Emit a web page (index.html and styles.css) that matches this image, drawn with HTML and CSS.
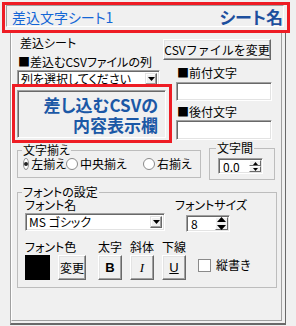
FILE: index.html
```html
<!DOCTYPE html>
<html lang="ja">
<head>
    <meta charset="UTF-8">
    <title>差込文字シート</title>
    <link rel="stylesheet" href="styles.css">
</head>
<body>
    <div class="sheet-title">
        <div class="title-field">
            <span class="title-text">差込文字シート1</span>
            <span class="title-note">シート名</span>
        </div>
    </div>

    <div class="panel">
        <div class="page">
            <div class="top">
                <div class="col-left">
                    <div class="lbl lbl-sheet">差込シート</div>
                    <div class="lbl lbl-col">■差込むCSVファイルの列</div>
                    <div class="combo combo-col">
                        <span class="combo-text">列を選択してください</span>
                        <span class="combo-btn"><svg width="7" height="4"><path d="M0 0h7L3.5 4z"/></svg></span>
                    </div>
                    <div class="csv-box">
                        <div class="csv-field">
                            <span>差し込むCSVの</span>
                            <span>内容表示欄</span>
                        </div>
                    </div>
                </div>
                <div class="col-right">
                    <button class="btn btn-csv">CSVファイルを変更</button>
                    <div class="lbl lbl-pre">■前付文字</div>
                    <div class="textbox tb-pre"></div>
                    <div class="lbl lbl-post">■後付文字</div>
                    <div class="textbox tb-post"></div>
                </div>
            </div>

            <div class="row-align">
                <fieldset class="group group-align">
                    <legend>文字揃え</legend>
                    <div class="radios">
                        <label class="radio r-left"><span class="radio-dot checked"></span>左揃え</label>
                        <label class="radio r-center"><span class="radio-dot"></span>中央揃え</label>
                        <label class="radio r-right"><span class="radio-dot"></span>右揃え</label>
                    </div>
                </fieldset>
                <fieldset class="group group-spacing">
                    <legend>文字間</legend>
                    <div class="spin spin-spacing">
                        <span class="spin-text">0.0</span>
                        <span class="spin-btns">
                            <span class="spin-half"><svg width="5" height="3"><path d="M2.5 0L5 3H0z"/></svg></span>
                            <span class="spin-half"><svg width="5" height="3"><path d="M0 0h5L2.5 3z"/></svg></span>
                        </span>
                    </div>
                </fieldset>
            </div>

            <fieldset class="group group-font">
                <legend>フォントの設定</legend>
                <div class="font-top">
                    <div class="fname-col">
                        <div class="lbl">フォント名</div>
                        <div class="combo combo-font">
                            <span class="combo-text">MS ゴシック</span>
                            <span class="combo-btn"><svg width="7" height="4"><path d="M0 0h7L3.5 4z"/></svg></span>
                        </div>
                    </div>
                    <div class="fsize-col">
                        <div class="lbl">フォントサイズ</div>
                        <div class="spin spin-size">
                            <span class="spin-text">8</span>
                            <span class="spin-arrows">
                                <svg width="9" height="13"><path d="M4.5 0L9 5H0z M0 8h9L4.5 13z"/></svg>
                            </span>
                        </div>
                    </div>
                </div>
                <div class="style-grid">
                    <div class="lbl">フォント色</div>
                    <div class="lbl">太字</div>
                    <div class="lbl">斜体</div>
                    <div class="lbl">下線</div>
                    <div></div>

                    <div class="color-cell">
                        <span class="swatch"></span>
                        <button class="btn btn-change">変更</button>
                    </div>
                    <div><button class="btn btn-style bold">B</button></div>
                    <div><button class="btn btn-style italic">I</button></div>
                    <div><button class="btn btn-style under">U</button></div>
                    <label class="check"><span class="check-box"></span>縦書き</label>
                </div>
            </fieldset>
        </div>
    </div>
</body>
</html>
```

FILE: styles.css
```css
* {
    box-sizing: border-box;
}
body {
    margin: 0;
    width: 296px;
    height: 326px;
    overflow: hidden;
    background: #f0f0f0;
    font-family: "Noto Sans CJK JP", "Noto Sans", sans-serif;
    font-size: 12px;
    line-height: 14px;
    font-feature-settings: "palt";
    color: #000;
}

/* sheet name strip with red note frame */
.sheet-title {
    position: relative;
    z-index: 1;
    margin: 2px 0 0 2px;
    width: 288px;
    height: 31px;
    border: 3px solid #ee1c24;
    padding: 0 3px 3px 1px;
}
.title-field {
    height: 100%;
    display: flex;
    align-items: center;
    justify-content: space-between;
    padding: 0 0 0 5px;
    border: 1px solid;
    border-color: #a0a0a0 #fff #fff #a0a0a0;
}
.title-text {
    font-size: 14px;
    color: #1466d6;
    margin-top: 1px;
}
.title-note {
    font-size: 17px;
    font-weight: bold;
    color: #1d4f9e;
    margin-top: 1px;
}

/* tab page */
.panel {
    margin-left: 10px;
    width: 276px;
    height: 292px;
    border-left: 1px solid #a0a0a0;
    border-right: 1px solid #696969;
    border-bottom: 2px solid #696969;
    padding: 0 3px 2px 0;
}
.page {
    height: 100%;
    border-left: 1px solid #fff;
    border-right: 1px solid #a0a0a0;
    border-bottom: 1px solid #a0a0a0;
}

.lbl {
    white-space: nowrap;
}

.top {
    display: flex;
    height: 110px;
}
.col-left {
    width: 151px;
    flex: none;
}
.col-right {
    width: 112px;
    flex: none;
}
.lbl-sheet {
    margin: 3px 0 0 8px;
}
.lbl-col {
    margin: 5px 0 0 6px;
}

/* win controls */
.btn {
    font-family: inherit;
    font-size: 12px;
    line-height: 14px;
    color: #000;
    background: #f0f0f0;
    border: 1px solid;
    border-color: #fff #696969 #696969 #fff;
    box-shadow: inset -1px -1px 0 #a0a0a0, inset 1px 1px 0 #e3e3e3;
    padding: 0;
    margin: 0;
}
.textbox,
.combo,
.spin {
    background: #fff;
    border: 1px solid;
    border-color: #a0a0a0 #fff #fff #a0a0a0;
    box-shadow: inset 1px 1px 0 #696969, inset -1px -1px 0 #e3e3e3;
}
.combo {
    display: flex;
    align-items: center;
    justify-content: space-between;
    padding: 2px 2px 2px 3px;
    overflow: hidden;
}
.combo-text {
    white-space: nowrap;
    line-height: 12px;
}
.combo-btn {
    flex: none;
    width: 12px;
    height: 12px;
    display: flex;
    align-items: center;
    justify-content: center;
    background: #f0f0f0;
    border: 1px solid;
    border-color: #e3e3e3 #696969 #696969 #e3e3e3;
    box-shadow: inset -1px -1px 0 #a0a0a0, inset 1px 1px 0 #fff;
}
.combo-col {
    margin: 1px 0 0 5px;
    width: 143px;
    height: 18px;
}

/* CSV content area with red note frame */
.csv-box {
    position: relative;
    z-index: 1;
    margin-top: -4px;
    width: 160px;
    height: 59px;
    border: 3px solid #ee1c24;
    padding: 3px 3px 2px 2px;
    background: #f0f0f0;
}
.csv-field {
    height: 100%;
    display: flex;
    flex-direction: column;
    justify-content: center;
    align-items: flex-end;
    padding: 1px 7px 0 0;
    border: 1px solid;
    border-color: #a0a0a0 #fff #fff #a0a0a0;
    box-shadow: inset 1px 1px 0 #696969;
    font-size: 17px;
    line-height: 20px;
    font-weight: bold;
    color: #1b58a6;
    white-space: nowrap;
}

.btn-csv {
    display: block;
    margin-top: 6px;
    width: 108px;
    height: 21px;
}
.lbl-pre {
    margin: 6px 0 0 14px;
}
.tb-pre {
    margin: 2px 0 0 13px;
    width: 96px;
    height: 19px;
}
.lbl-post {
    margin: 4px 0 0 14px;
}
.tb-post {
    margin: 1px 0 0 13px;
    width: 96px;
    height: 20px;
}

/* group boxes */
.group {
    margin: 0;
    padding: 0;
    min-width: 0;
    border: 1px solid #bdbdbd;
}
.group legend {
    padding: 0 1px;
    font-size: 12px;
    line-height: 12px;
}
.row-align {
    display: flex;
    align-items: flex-start;
    height: 43px;
}
.group-align {
    margin: 1px 0 0 5px;
    width: 184px;
    height: 34px;
}
.group-align legend {
    margin-left: 4px;
}
.radios {
    display: flex;
    padding-left: 5px;
    height: 14px;
    margin-top: 1px;
}
.radio {
    display: flex;
    align-items: center;
    white-space: nowrap;
}
.r-left {
    width: 43px;
}
.r-center {
    width: 77px;
}
.radio-dot {
    width: 12px;
    height: 12px;
    margin-right: 2px;
    border-radius: 50%;
    border: 1px solid #8a8a8a;
    background: #fff;
    display: flex;
    align-items: center;
    justify-content: center;
}
.radio-dot.checked::after {
    content: "";
    width: 4px;
    height: 4px;
    border-radius: 50%;
    background: #222;
}

.group-spacing {
    margin: -1px 0 0 8px;
    width: 66px;
    height: 38px;
}
.group-spacing legend {
    margin-left: 6px;
}
.spin {
    display: flex;
    justify-content: space-between;
}
.spin-text {
    padding: 1px 0 0 3px;
    line-height: 12px;
}
.spin-spacing {
    margin: 4px 0 0 8px;
    width: 45px;
    height: 16px;
    padding: 1px;
}
.spin-btns {
    width: 12px;
    display: flex;
    flex-direction: column;
}
.spin-half {
    flex: 1;
    display: flex;
    align-items: center;
    justify-content: center;
    background: #f0f0f0;
    border: 1px solid;
    border-color: #fff #696969 #696969 #fff;
}

/* font settings */
.group-font {
    margin-left: 5px;
    width: 260px;
    height: 102px;
    padding: 0 0 0 7px;
}
.group-font legend {
    margin-left: -3px;
}
.font-top {
    display: flex;
    height: 33px;
}
.fname-col {
    width: 150px;
    flex: none;
}
.combo-font {
    margin-top: 1px;
    width: 140px;
    height: 18px;
}
.spin-size {
    margin: 3px 0 0 11px;
    width: 44px;
    height: 17px;
    padding: 1px;
}
.spin-arrows {
    width: 13px;
    display: flex;
    align-items: center;
    justify-content: center;
    background: #f0f0f0;
    border: 1px solid;
    border-color: #fff #696969 #696969 #fff;
}
.style-grid {
    margin-top: 9px;
    display: grid;
    grid-template-columns: 73px 32px 32px 36px auto;
    row-gap: 1px;
}
.color-cell {
    display: flex;
}
.swatch {
    width: 25px;
    height: 25px;
    background: #000;
}
.btn-change {
    margin-left: 8px;
    width: 28px;
    height: 25px;
}
.btn-style {
    width: 24px;
    height: 25px;
    font-family: "Liberation Sans", sans-serif;
    font-size: 13px;
}
.bold {
    font-weight: bold;
}
.italic {
    font-style: italic;
    font-family: "Liberation Serif", serif;
}
.under {
    text-decoration: underline;
}
.check {
    display: flex;
    align-items: center;
    align-self: start;
    margin-top: 3px;
    white-space: nowrap;
}
.check-box {
    width: 13px;
    height: 13px;
    margin-right: 5px;
    background: #fff;
    border: 1px solid #8a8a8a;
}
```
